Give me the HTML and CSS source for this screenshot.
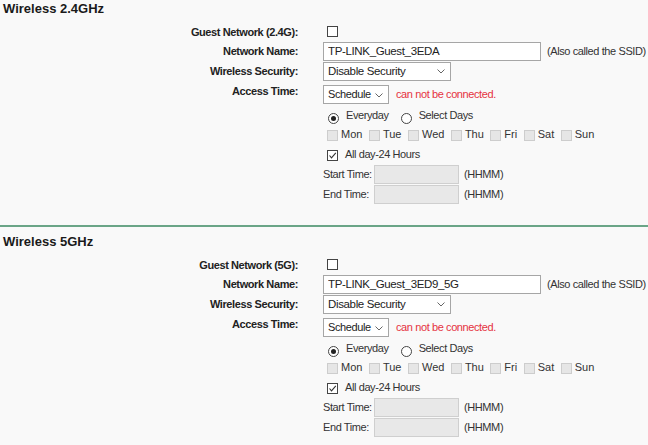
FILE: index.html
```
<!DOCTYPE html>
<html lang="en">
<head>
    <meta charset="UTF-8">
    <title>Guest Network</title>
    <link rel="stylesheet" href="styles.css">
</head>
<body>

    <div class="section">
        <h2 class="title">Wireless 2.4GHz</h2>
        <div class="row r-guest">
            <span class="lbl">Guest Network (2.4G):</span>
            <span class="box"></span>
        </div>
        <div class="row r-name">
            <span class="lbl">Network Name:</span>
            <input class="text" type="text" value="TP-LINK_Guest_3EDA">
            <span class="note">(Also called the SSID)</span>
        </div>
        <div class="row r-sec">
            <span class="lbl">Wireless Security:</span>
            <div class="select wide"><span>Disable Security</span><svg width="8" height="5" viewBox="0 0 8 5"><path d="M0.5 0.5 L4 4 L7.5 0.5" fill="none" stroke="#666" stroke-width="1"/></svg></div>
        </div>
        <div class="row r-access">
            <span class="lbl lbl-up">Access Time:</span>
            <div class="select narrow"><span>Schedule</span><svg width="8" height="5" viewBox="0 0 8 5"><path d="M0.5 0.5 L4 4 L7.5 0.5" fill="none" stroke="#666" stroke-width="1"/></svg></div>
            <span class="warn">can not be connected.</span>
        </div>
        <div class="sub">
            <div class="row r-radio">
                <span class="radio on"></span><span class="opt">Everyday</span>
                <span class="radio"></span><span class="opt">Select Days</span>
            </div>
            <div class="row r-days">
                <span class="box off"></span><span class="day">Mon</span>
                <span class="box off"></span><span class="day">Tue</span>
                <span class="box off"></span><span class="day">Wed</span>
                <span class="box off"></span><span class="day">Thu</span>
                <span class="box off"></span><span class="day">Fri</span>
                <span class="box off"></span><span class="day">Sat</span>
                <span class="box off"></span><span class="day">Sun</span>
            </div>
            <div class="row r-allday">
                <span class="box checked"><svg width="9" height="9" viewBox="0 0 9 9"><path d="M1.5 4.5 L3.5 6.8 L7.8 1.8" fill="none" stroke="#333" stroke-width="1.1"/></svg></span>
                <span class="opt">All day-24 Hours</span>
            </div>
            <div class="row r-time">
                <span class="tlabel">Start Time:</span>
                <input class="time" type="text" disabled>
                <span class="hint">(HHMM)</span>
            </div>
            <div class="row r-time">
                <span class="tlabel">End Time:</span>
                <input class="time" type="text" disabled>
                <span class="hint">(HHMM)</span>
            </div>
        </div>
    </div>

    <hr class="sep">

    <div class="section">
        <h2 class="title">Wireless 5GHz</h2>
        <div class="row r-guest">
            <span class="lbl">Guest Network (5G):</span>
            <span class="box"></span>
        </div>
        <div class="row r-name">
            <span class="lbl">Network Name:</span>
            <input class="text" type="text" value="TP-LINK_Guest_3ED9_5G">
            <span class="note">(Also called the SSID)</span>
        </div>
        <div class="row r-sec">
            <span class="lbl">Wireless Security:</span>
            <div class="select wide"><span>Disable Security</span><svg width="8" height="5" viewBox="0 0 8 5"><path d="M0.5 0.5 L4 4 L7.5 0.5" fill="none" stroke="#666" stroke-width="1"/></svg></div>
        </div>
        <div class="row r-access">
            <span class="lbl lbl-up">Access Time:</span>
            <div class="select narrow"><span>Schedule</span><svg width="8" height="5" viewBox="0 0 8 5"><path d="M0.5 0.5 L4 4 L7.5 0.5" fill="none" stroke="#666" stroke-width="1"/></svg></div>
            <span class="warn">can not be connected.</span>
        </div>
        <div class="sub">
            <div class="row r-radio">
                <span class="radio on"></span><span class="opt">Everyday</span>
                <span class="radio"></span><span class="opt">Select Days</span>
            </div>
            <div class="row r-days">
                <span class="box off"></span><span class="day">Mon</span>
                <span class="box off"></span><span class="day">Tue</span>
                <span class="box off"></span><span class="day">Wed</span>
                <span class="box off"></span><span class="day">Thu</span>
                <span class="box off"></span><span class="day">Fri</span>
                <span class="box off"></span><span class="day">Sat</span>
                <span class="box off"></span><span class="day">Sun</span>
            </div>
            <div class="row r-allday">
                <span class="box checked"><svg width="9" height="9" viewBox="0 0 9 9"><path d="M1.5 4.5 L3.5 6.8 L7.8 1.8" fill="none" stroke="#333" stroke-width="1.1"/></svg></span>
                <span class="opt">All day-24 Hours</span>
            </div>
            <div class="row r-time">
                <span class="tlabel">Start Time:</span>
                <input class="time" type="text" disabled>
                <span class="hint">(HHMM)</span>
            </div>
            <div class="row r-time">
                <span class="tlabel">End Time:</span>
                <input class="time" type="text" disabled>
                <span class="hint">(HHMM)</span>
            </div>
        </div>
    </div>

</body>
</html>
```

FILE: styles.css
```
* {
    margin: 0;
    padding: 0;
    box-sizing: border-box;
}

body {
    font-family: "Liberation Sans", Arial, sans-serif;
    font-size: 11px;
    letter-spacing: -0.4px;
    color: #333;
    background-color: #f9f9f9;
    width: 648px;
    height: 445px;
    overflow: hidden;
}

.section {
    padding-bottom: 20px;
}

.title {
    font-size: 13px;
    font-weight: bold;
    letter-spacing: 0;
    line-height: 18px;
    color: #1a1a1a;
    padding-left: 3px;
    margin-bottom: 4px;
}

.row {
    display: flex;
    align-items: center;
    white-space: nowrap;
}

.lbl {
    width: 298px;
    margin-right: 25px;
    text-align: right;
    font-weight: bold;
    color: #222;
}

.lbl-up {
    padding-bottom: 7px;
}

.r-guest { height: 19px; }
.r-name { height: 20px; }
.r-sec { height: 20px; }
.r-access { height: 20px; margin-top: 3px; }
.r-radio { height: 18px; margin-top: 2px; }
.r-days { height: 20px; }
.r-allday { height: 20px; }
.r-time { height: 20px; }

.sub {
    margin-left: 323px;
}

.box {
    display: inline-flex;
    align-items: center;
    justify-content: center;
    width: 11px;
    height: 11px;
    border: 1px solid #444;
    background-color: #fff;
    margin-left: 4px;
}

.box.off {
    background-color: #e6e6e6;
    border-color: #cdcdcd;
}

.text {
    width: 218px;
    height: 19px;
    border: 1px solid #a6a6a6;
    background-color: #fff;
    padding: 0 4px;
    font-family: inherit;
    font-size: 11.5px;
    letter-spacing: -0.35px;
    color: #222;
}

.note {
    margin-left: 6px;
}

.select {
    display: flex;
    align-items: center;
    justify-content: space-between;
    height: 19px;
    border: 1px solid #a6a6a6;
    background-color: #fff;
    padding: 0 5px 0 4px;
    font-size: 11.5px;
    letter-spacing: -0.35px;
    color: #222;
}

.select.wide {
    width: 128px;
}

.select.narrow {
    width: 66px;
    font-size: 11px;
    letter-spacing: -0.4px;
}

.select.narrow svg {
    margin-top: 2px;
}

.warn {
    margin-left: 7px;
    color: #e5323f;
}

.radio {
    display: inline-flex;
    align-items: center;
    justify-content: center;
    width: 11px;
    height: 11px;
    border: 1px solid #444;
    border-radius: 50%;
    background-color: #fff;
    margin-top: 6px;
    margin-left: 5px;
}

.radio.on::after {
    content: "";
    width: 5px;
    height: 5px;
    border-radius: 50%;
    background-color: #222;
}

.opt {
    margin-left: 7px;
    margin-right: 6px;
}

.r-radio .radio + .opt + .radio {
    margin-left: 6px;
}

.day {
    letter-spacing: 0;
    margin-left: 3px;
    margin-right: 4.5px;
}

.r-days .box {
    margin-left: 2px;
    margin-top: 2px;
}

.r-days .box:first-child {
    margin-left: 4px;
}

.r-allday .box {
    margin-top: 2px;
}

.r-allday .opt {
    margin-left: 7px;
}

.tlabel {
    width: 51px;
}

.time {
    width: 85px;
    height: 19px;
    border: 1px solid #cfcfcf;
    background-color: #e8e8e8;
}

.hint {
    margin-left: 5px;
}

.sep {
    border: none;
    border-top: 2px solid #6aa587;
    margin-top: 1px;
    margin-bottom: 6px;
}
```
